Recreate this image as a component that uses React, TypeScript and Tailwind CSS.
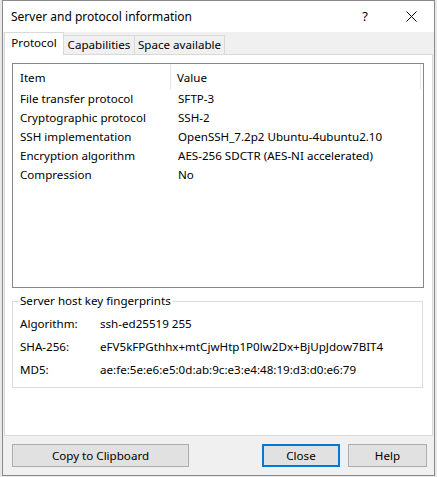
import React from "react";

const rows: [string, string][] = [
  ["File transfer protocol", "SFTP-3"],
  ["Cryptographic protocol", "SSH-2"],
  ["SSH implementation", "OpenSSH_7.2p2 Ubuntu-4ubuntu2.10"],
  ["Encryption algorithm", "AES-256 SDCTR (AES-NI accelerated)"],
  ["Compression", "No"],
];

const fps: [string, string][] = [
  ["Algorithm:", "ssh-ed25519 255"],
  ["SHA-256:", "eFV5kFPGthhx+mtCjwHtp1P0lw2Dx+BjUpJdow7BIT4"],
  ["MD5:", "ae:fe:5e:e6:e5:0d:ab:9c:e3:e4:48:19:d3:d0:e6:79"],
];

export default function App() {
  return (
    <div
      className="w-[437px] h-[477px] bg-[#e8e8e8] overflow-hidden text-[11.6px] text-black"
      style={{ fontFamily: '"Noto Sans", "Open Sans", sans-serif' }}
    >
      <div className="ml-[2px] w-[433px] h-[476px] border border-[#8a8a8a] bg-[#f0f0f0] flex flex-col">
        {/* title bar */}
        <div className="h-[31px] bg-white flex items-center pl-[8px] shrink-0">
          <span className="leading-none text-[12px]">Server and protocol information</span>
          <span className="ml-auto w-[46px] text-center text-[13px] leading-none">?</span>
          <span className="w-[46px] flex justify-center">
            <svg width="11" height="11" viewBox="0 0 11 11">
              <path d="M0.5 0.5 L10.5 10.5 M10.5 0.5 L0.5 10.5" stroke="#000" strokeWidth="1" fill="none" />
            </svg>
          </span>
        </div>
        {/* tabs */}
        <div className="flex items-end pl-[1px] pt-[1px] h-[23px] -mb-px relative z-10 shrink-0">
          <div className="h-[23px] w-[60px] bg-white border border-b-0 border-[#d9d9d9] flex items-center justify-center pb-[2px]">
            Protocol
          </div>
          <div className="h-[20px] w-[71px] bg-[#f0f0f0] border border-l-0 border-[#d9d9d9] flex items-center justify-center">
            Capabilities
          </div>
          <div className="h-[20px] w-[90px] bg-[#f0f0f0] border border-l-0 border-[#d9d9d9] flex items-center justify-center">
            Space available
          </div>
        </div>
        {/* panel */}
        <div className="mx-[1px] h-[382px] bg-white border border-[#d9d9d9] pt-[8px] pl-[7px] shrink-0">
          <div className="w-[412px] h-[225px] border border-[#828790] flex flex-col">
            <div className="h-[25px] flex items-stretch shrink-0">
              <div className="w-[158px] pl-[7px] pt-[2px] flex items-center border-r border-[#e5e5e5]">Item</div>
              <div className="w-[250px] pl-[6px] pt-[2px] flex items-center border-r border-[#e5e5e5]">Value</div>
            </div>
            {rows.map(([a, b]) => (
              <div key={a} className="h-[19px] flex items-center shrink-0">
                <div className="w-[158px] pl-[7px]">{a}</div>
                <div className="pl-[7px] whitespace-nowrap">{b}</div>
              </div>
            ))}
          </div>
          <div className="relative mt-[13px] w-[411px] h-[87px] border border-[#dcdcdc]">
            <span className="absolute left-[7px] top-[-9px] bg-white pr-[1px] leading-[16px]">
              Server host key fingerprints
            </span>
            <div className="pt-[10px] flex flex-col">
              {fps.map(([a, b]) => (
                <div key={a} className="h-[23px] flex items-center">
                  <div className="w-[87px] pl-[7px]">{a}</div>
                  <div className="whitespace-nowrap">{b}</div>
                </div>
              ))}
            </div>
          </div>
        </div>
        {/* buttons */}
        <div className="flex items-start pt-[8px] pl-[9px]">
          <div className="w-[177px] h-[23px] bg-[#e1e1e1] border border-[#adadad] flex items-center justify-center">
            Copy to Clipboard
          </div>
          <div className="ml-[73px] w-[78px] h-[23px] bg-[#e1e1e1] border-2 border-[#0078d7] flex items-center justify-center">
            Close
          </div>
          <div className="ml-[8px] w-[79px] h-[23px] bg-[#e1e1e1] border border-[#adadad] flex items-center justify-center">
            Help
          </div>
        </div>
      </div>
    </div>
  );
}
